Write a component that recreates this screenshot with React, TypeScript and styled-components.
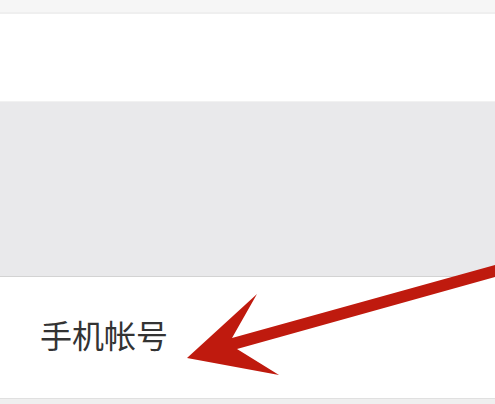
import * as React from "react";
import styled, { createGlobalStyle } from "styled-components";

const GlobalStyle = createGlobalStyle`
  html, body {
    margin: 0;
    padding: 0;
    background: #efefef;
  }
  body {
    font-family: "Noto Sans CJK SC", "Noto Sans", sans-serif;
  }
`;

const Screen = styled.div`
  position: relative;
  width: 495px;
  height: 404px;
  overflow: hidden;
  display: flex;
  flex-direction: column;
  background: #efefef;
`;

const StatusStrip = styled.div`
  height: 12px;
  flex-shrink: 0;
  background: #f6f6f6;
  border-bottom: 2px solid #efefef;
`;

const Panel = styled.div<{ $height: number; $tone: "white" | "gray"; $line: string }>`
  height: ${(p) => p.$height}px;
  flex-shrink: 0;
  box-sizing: border-box;
  display: flex;
  align-items: center;
  padding-left: 40px;
  background: ${(p) => (p.$tone === "gray" ? "#e9e9eb" : "#ffffff")};
  border-bottom: 1px solid ${(p) => p.$line};
`;

const Label = styled.span`
  font-size: 32px;
  line-height: 1;
  color: #333333;
  margin-bottom: 7px;
`;

const Annotation = styled.svg`
  position: absolute;
  left: 0;
  top: 0;
  pointer-events: none;
`;

function PointerArrow() {
  return (
    <Annotation width="495" height="404" viewBox="0 0 495 404">
      <polygon
        points="187,358 257,294 232,338 500,263.6 500,275.6 237,349 279,375"
        fill="#bf1a0e"
      />
    </Annotation>
  );
}

export default function App() {
  return (
    <>
      <GlobalStyle />
      <Screen>
        <StatusStrip />
        <Panel $height={88} $tone="white" $line="#f1f1f1" />
        <Panel $height={175} $tone="gray" $line="#d3d3d3" />
        <Panel $height={122} $tone="white" $line="#e0e0e0">
          <Label>手机帐号</Label>
        </Panel>
        <PointerArrow />
      </Screen>
    </>
  );
}
